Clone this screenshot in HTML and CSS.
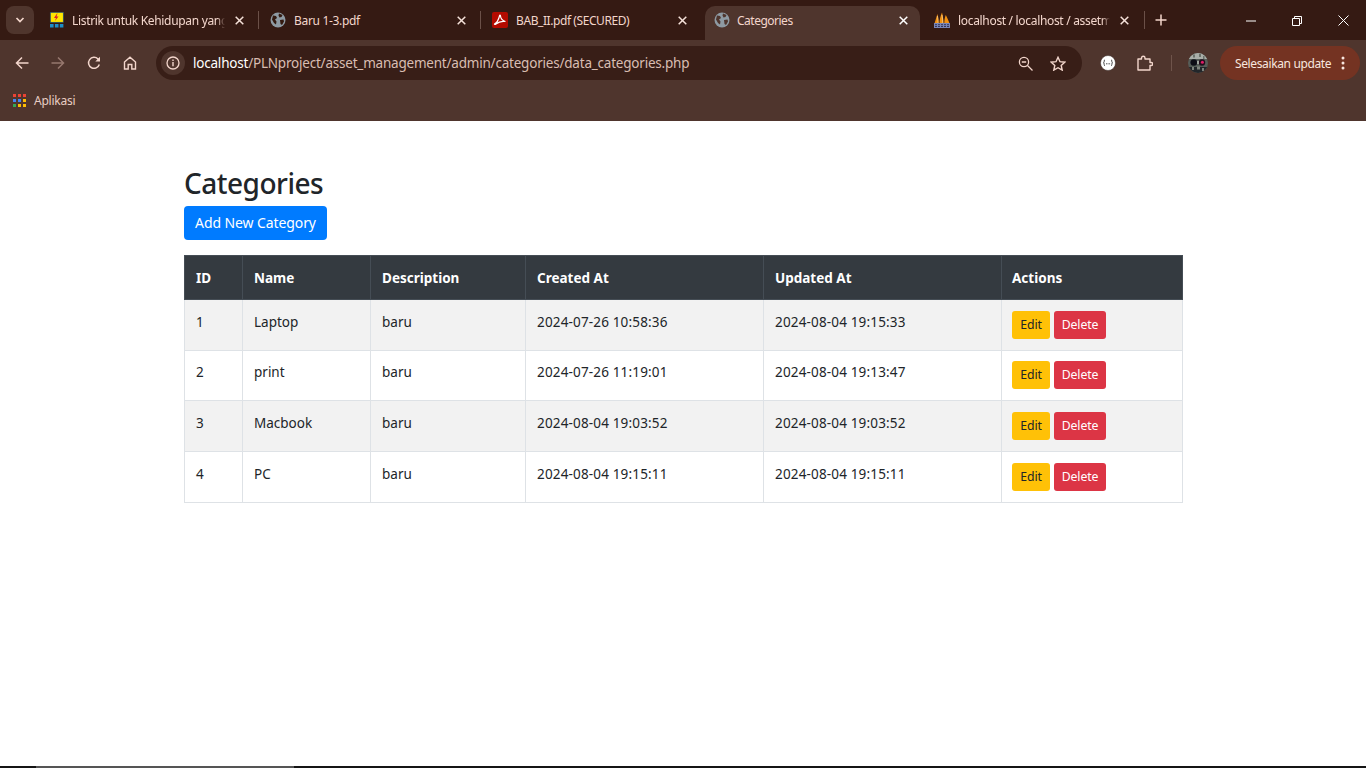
FILE: index.html
```html
<!DOCTYPE html>
<html lang="en">
<head>
    <meta charset="UTF-8">
    <title>Categories</title>
    <link rel="stylesheet" href="styles.css">
</head>
<body>
    <header class="browser">
        <div class="tabstrip">
            <button class="tab-search">
                <svg width="10" height="6" viewBox="0 0 10 6"><path d="M1.5 1l3.5 3.5L8.500 1" fill="none" stroke="#f3d6cc" stroke-width="1.700"/></svg>
            </button>
            <div class="tab tab-1">
                <svg class="favicon" width="16" height="16" viewBox="0 0 16 16"><rect x="1.300" y=".3" width="13" height="10" fill="#ffe600" stroke="#1b4f7a" stroke-width=".7"/><path d="M8 1.500 5 6h2L6 9l3.500-4.500h-2l1-3z" fill="#d8232a"/><path d="M1 12h3.600v3.500H1zM5.900 12h3.600v3.500H5.900zM10.800 12h3.600v3.500h-3.600z" fill="#1d8fc9"/></svg>
                <span class="tab-title fade">Listrik untuk Kehidupan yang</span>
                <svg class="tab-close" width="9" height="9" viewBox="0 0 9 9"><path d="M.7.700l7.600 7.600M8.300.700.7 8.300" stroke="#f6e2da" stroke-width="1.500"/></svg>
            </div>
            <i class="tab-sep"></i>
            <div class="tab tab-2">
                <svg class="favicon" width="16" height="16" viewBox="0 0 16 16"><circle cx="8" cy="8" r="7.500" fill="#8e9aa3"/><path d="M3 3.500l3 .5 1 2-2 1.500 1.500 2-.5 3-2-1.500-2-3.500zM9 1.500l3.500 1.500-1 2-2 .5-1-2zM10 8l3.500-.5.500 2-2 3.500-1.500-1z" fill="#33190f"/></svg>
                <span class="tab-title">Baru 1-3.pdf</span>
                <svg class="tab-close" width="9" height="9" viewBox="0 0 9 9"><path d="M.7.700l7.600 7.600M8.300.700.7 8.300" stroke="#f6e2da" stroke-width="1.500"/></svg>
            </div>
            <i class="tab-sep"></i>
            <div class="tab tab-3">
                <svg class="favicon" width="16" height="16" viewBox="0 0 16 16"><rect width="16" height="16" rx="2" fill="#b30b00"/><path d="M2.500 12c2-1 4-4 5-8 .2-1.200 1-1 1 0 0 2 2 5 5 5.500-3-.5-7 .3-9.500 2.500-1 .8-1.800.5-1.500 0z" fill="none" stroke="#fff" stroke-width="1.200"/></svg>
                <span class="tab-title">BAB_II.pdf (SECURED)</span>
                <svg class="tab-close" width="9" height="9" viewBox="0 0 9 9"><path d="M.7.700l7.600 7.600M8.300.700.7 8.300" stroke="#f6e2da" stroke-width="1.500"/></svg>
            </div>
            <div class="tab tab-active">
                <svg class="favicon" width="16" height="16" viewBox="0 0 16 16"><circle cx="8" cy="8" r="7.500" fill="#8e9aa3"/><path d="M3 3.500l3 .5 1 2-2 1.500 1.500 2-.5 3-2-1.500-2-3.500zM9 1.500l3.500 1.500-1 2-2 .5-1-2zM10 8l3.500-.5.500 2-2 3.500-1.500-1z" fill="#4f352d"/></svg>
                <span class="tab-title">Categories</span>
                <svg class="tab-close" width="9" height="9" viewBox="0 0 9 9"><path d="M.7.700l7.600 7.600M8.300.700.7 8.300" stroke="#fff" stroke-width="1.500"/></svg>
            </div>
            <div class="tab tab-5">
                <svg class="favicon" width="16" height="16" viewBox="0 0 16 16"><path d="M.5 11.500C1.500 8 2.500 4.500 3.500 2c.6 3 1.200 6.500 1.200 9.500zM5.500 11.500c0-3.500 1-8 2.500-11 1 3.500 1.500 7.500 1.500 11zM10.300 11.500c0-3 .4-6 1.500-8.500 1.200 2.500 3 6 3.700 8.500z" fill="#f29111"/><path d="M3.500 4c.4 2.500.6 5 .6 7.500M8 3c.5 3 .8 5.500.8 8.500" stroke="#fbe3b5" stroke-width=".6" fill="none"/><rect x="0" y="11" width="16" height="5" fill="#7a86b8"/><path d="M1 12.700h14M1 14.500h14" stroke="#2c2f55" stroke-width=".9" stroke-dasharray="2 1"/></svg>
                <span class="tab-title fade">localhost / localhost / assetm</span>
                <svg class="tab-close" width="9" height="9" viewBox="0 0 9 9"><path d="M.7.700l7.600 7.600M8.300.700.7 8.300" stroke="#f6e2da" stroke-width="1.500"/></svg>
            </div>
            <i class="tab-sep"></i>
            <svg class="new-tab" width="12" height="12" viewBox="0 0 12 12"><path d="M6 .500v11M.500 6h11" stroke="#f3d6cc" stroke-width="1.500"/></svg>
            <div class="window-controls">
                <svg width="10" height="10" viewBox="0 0 10 10"><path d="M0 5h10" stroke="#fff"/></svg>
                <svg width="10" height="10" viewBox="0 0 10 10"><path d="M.500 2.500h7v7h-7zM2.500 2.500v-2h7v7h-2" fill="none" stroke="#fff"/></svg>
                <svg width="11" height="11" viewBox="0 0 11 11"><path d="M.500.500l10 10M10.500.500l-10 10" stroke="#fff"/></svg>
            </div>
        </div>
        <div class="toolbar">
            <svg class="nav-icon" width="14" height="14" viewBox="0 0 14 14"><path d="M13.500 7H1.500M7 1.500 1.500 7 7 12.500" fill="none" stroke="#f3d6cc" stroke-width="1.500"/></svg>
            <svg class="nav-icon" width="14" height="14" viewBox="0 0 14 14"><path d="M.500 7h12M7 1.500 12.500 7 7 12.500" fill="none" stroke="#97786e" stroke-width="1.500"/></svg>
            <svg class="nav-icon" width="14" height="14" viewBox="0 0 14 14"><path d="M12.300 8.500A5.500 5.500 0 1 1 11 3l1.500 1.500" fill="none" stroke="#f3d6cc" stroke-width="1.500"/><path d="M13 .700V5.500H8.300z" fill="#f3d6cc"/></svg>
            <svg class="nav-icon" width="14" height="14" viewBox="0 0 14 14"><path d="M1.500 6 7 1.200 12.500 6v7H8.800V8.500H5.200V13H1.500z" fill="none" stroke="#f3d6cc" stroke-width="1.400"/></svg>
            <div class="omnibox">
                <span class="site-info">
                    <svg width="14" height="14" viewBox="0 0 14 14"><circle cx="7" cy="7" r="6" fill="none" stroke="#f3d6cc" stroke-width="1.300"/><path d="M7 6v4.200M7 3.500v1.400" stroke="#f3d6cc" stroke-width="1.400"/></svg>
                </span>
                <span class="url"><b>localhost</b>/PLNproject/asset_management/admin/categories/data_categories.php</span>
                <svg class="zoom-icon" width="15" height="15" viewBox="0 0 15 15"><circle cx="6" cy="6" r="4.600" fill="none" stroke="#f3d6cc" stroke-width="1.300"/><path d="M3.800 6h4.400M9.500 9.500l5 5" stroke="#f3d6cc" stroke-width="1.300"/></svg>
                <svg class="star-icon" width="16" height="15" viewBox="0 0 16 15"><path d="M8 1.300l2 4.400 4.800.5-3.600 3.200 1 4.700L8 11.700l-4.200 2.400 1-4.700L1.200 6.200 6 5.700z" fill="none" stroke="#f3d6cc" stroke-width="1.400"/></svg>
            </div>
            <svg class="ext-json" width="16" height="16" viewBox="0 0 16 16"><circle cx="8" cy="8" r="7.500" fill="#fff" stroke="#3a2a26" stroke-width=".5"/><path d="M5 4.800c-1.200 0-.6 2.200-1 2.700-.1.200-.3.300-.5.300.2 0 .4.100.5.300.4.500-.2 2.700 1 2.700M11 4.800c1.200 0 .6 2.200 1 2.700.1.200.3.300.5.300-.2 0-.4.100-.5.300-.4.500.2 2.700-1 2.700" fill="none" stroke="#222" stroke-width=".8"/><path d="M6 8.800h.9M7.600 8.800h.9M9.200 8.800h.9" stroke="#222" stroke-width=".9"/></svg>
            <svg class="ext-puzzle" width="16" height="16" viewBox="0 0 16 16"><path d="M1 4h3.500V3a1.700 1.700 0 0 1 3.500 0v1h5v3.500h1.200a1.500 1.500 0 0 1 0 3H13V15H1z" fill="none" stroke="#f3d6cc" stroke-width="1.400" stroke-linejoin="round"/></svg>
            <i class="toolbar-sep"></i>
            <svg class="avatar" width="20" height="20" viewBox="0 0 20 20">
                <defs>
                    <clipPath id="avatarClip"><circle cx="10" cy="10" r="10"/></clipPath>
                    <filter id="avatarBlur"><feGaussianBlur stdDeviation=".6"/></filter>
                </defs>
                <g clip-path="url(#avatarClip)">
                    <rect width="20" height="20" fill="#565d58"/>
                    <g filter="url(#avatarBlur)">
                        <path d="M2 0h16l2 6H0z" fill="#a9aea8"/>
                        <path d="M5 1.500h2v3H5zM11 1h2v3h-2zM15 3h1.500v3H15z" fill="#6a716b"/>
                        <circle cx="5.800" cy="9.500" r="3.300" fill="#0a0b16"/>
                        <circle cx="14" cy="9.500" r="3.200" fill="#20101c"/>
                        <circle cx="14.400" cy="9.300" r="1.500" fill="#e01c66"/>
                        <path d="M9 8h2v3H9z" fill="#9fa49e"/>
                        <path d="M0 14h20v6H0z" fill="#23272a"/>
                        <path d="M4 14h2v3H4zM9 13.500h3v3H9zM14 15h2v3h-2z" fill="#7d827c"/>
                    </g>
                </g>
            </svg>
            <div class="update-btn">
                <span>Selesaikan update</span>
                <svg width="4" height="14" viewBox="0 0 4 14"><circle cx="2" cy="2" r="1.500" fill="#f8e6df"/><circle cx="2" cy="7" r="1.500" fill="#f8e6df"/><circle cx="2" cy="12" r="1.500" fill="#f8e6df"/></svg>
            </div>
        </div>
        <div class="bookmarks">
            <svg width="13" height="13" viewBox="0 0 13 13">
                <rect width="3" height="3" fill="#ea4335"/><rect x="5" width="3" height="3" fill="#ea4335"/><rect x="10" width="3" height="3" fill="#ea4335"/>
                <rect y="5" width="3" height="3" fill="#4285f4"/><rect x="5" y="5" width="3" height="3" fill="#4285f4"/><rect x="10" y="5" width="3" height="3" fill="#fbbc05"/>
                <rect y="10" width="3" height="3" fill="#34a853"/><rect x="5" y="10" width="3" height="3" fill="#fbbc05"/><rect x="10" y="10" width="3" height="3" fill="#fbbc05"/>
            </svg>
            <span>Aplikasi</span>
        </div>
    </header>

    <main class="container">
        <h2>Categories</h2>
        <a class="btn btn-add">Add New Category</a>
        <table class="data-table">
            <thead>
                <tr>
                    <th class="col-id">ID</th>
                    <th class="col-name">Name</th>
                    <th class="col-desc">Description</th>
                    <th class="col-date">Created At</th>
                    <th class="col-date">Updated At</th>
                    <th class="col-actions">Actions</th>
                </tr>
            </thead>
            <tbody>
                <tr>
                    <td>1</td><td>Laptop</td><td>baru</td><td class="stamp">2024-07-26 10:58:36</td><td class="stamp">2024-08-04 19:15:33</td>
                    <td class="actions"><a class="btn-sm btn-edit">Edit</a><a class="btn-sm btn-delete">Delete</a></td>
                </tr>
                <tr>
                    <td>2</td><td>print</td><td>baru</td><td class="stamp">2024-07-26 11:19:01</td><td class="stamp">2024-08-04 19:13:47</td>
                    <td class="actions"><a class="btn-sm btn-edit">Edit</a><a class="btn-sm btn-delete">Delete</a></td>
                </tr>
                <tr>
                    <td>3</td><td>Macbook</td><td>baru</td><td class="stamp">2024-08-04 19:03:52</td><td class="stamp">2024-08-04 19:03:52</td>
                    <td class="actions"><a class="btn-sm btn-edit">Edit</a><a class="btn-sm btn-delete">Delete</a></td>
                </tr>
                <tr>
                    <td>4</td><td>PC</td><td>baru</td><td class="stamp">2024-08-04 19:15:11</td><td class="stamp">2024-08-04 19:15:11</td>
                    <td class="actions"><a class="btn-sm btn-edit">Edit</a><a class="btn-sm btn-delete">Delete</a></td>
                </tr>
            </tbody>
        </table>
    </main>

    <footer class="taskbar-edge"><i></i></footer>
</body>
</html>
```

FILE: styles.css
```css
* { box-sizing: border-box; }
html, body { height: 100%; }
body {
    margin: 0;
    display: flex;
    flex-direction: column;
    height: 768px;
    overflow: hidden;
    font-family: "Noto Sans", "Open Sans", sans-serif;
    color: #212529;
    background: #fff;
}

/* browser chrome */
.browser { height: 121px; flex: none; background: #4f352d; color: #f3d6cc; }
.tabstrip {
    height: 40px;
    background: #351a13;
    display: flex;
    align-items: flex-start;
    padding: 6px 0 0 6px;
    font-size: 12px;
}
.tab-search {
    width: 28px;
    height: 28px;
    border: none;
    padding: 0;
    border-radius: 8px;
    background: #4f352d;
    display: flex;
    align-items: center;
    justify-content: center;
    flex: none;
}
.tab {
    height: 34px;
    display: flex;
    align-items: center;
    flex: none;
    padding: 0 15px 6px 15px;
}
.tab-1 { width: 225px; }
.tab-2 { width: 222px; padding-left: 11px; }
.tab-3 { width: 224px; padding-left: 11px; padding-right: 18px; }
.tab-3 .tab-title { letter-spacing: -0.42px; }
.tab-active {
    width: 215px;
    background: #4f352d;
    border-radius: 10px 10px 0 0;
    padding-left: 9px;
    padding-right: 12px;
}
.tab-active .favicon { margin-right: 7px; }
.tab-active .tab-title { letter-spacing: -0.5px; }
.tab-5 { width: 225px; padding-left: 14px; padding-right: 16px; }
.favicon { flex: none; margin-right: 8px; }
.tab-1 .favicon { margin-right: 7px; }
.tab-title {
    flex: 1;
    min-width: 0;
    white-space: nowrap;
    letter-spacing: -0.32px;
}
/* long titles fade out before the close button */
.fade {
    -webkit-mask-image: linear-gradient(to left, transparent 3px, #000 11px);
    mask-image: linear-gradient(to left, transparent 3px, #000 11px);
}
.tab-close { margin-left: 7px; flex: none; }
.tab-sep { width: 1px; height: 18px; margin-top: 5px; background: #6b5048; flex: none; margin-left: -1px; }
.new-tab { margin: 8px 0 0 10px; flex: none; }
.window-controls {
    margin-left: auto;
    display: flex;
    align-items: center;
    gap: 36px;
    padding: 9px 17px 0 0;
}

.toolbar {
    height: 44px;
    display: flex;
    align-items: center;
    padding: 3px 6px 1px 15px;
}
.nav-icon { flex: none; margin-right: 22px; }
.nav-icon:nth-child(4) { margin-right: 19px; }
.omnibox {
    width: 926px;
    height: 34px;
    border-radius: 17px;
    background: #381e17;
    display: flex;
    align-items: center;
    padding: 0 16px 0 5px;
    font-size: 13.500px;
    flex: none;
}
.site-info {
    width: 24px;
    height: 24px;
    border-radius: 50%;
    background: #4f352d;
    display: flex;
    align-items: center;
    justify-content: center;
    margin-right: 8px;
    flex: none;
}
.url { flex: 1; white-space: nowrap; color: #d9bdb2; letter-spacing: -0.21px; }
.url b { font-weight: 400; color: #fff; }
.zoom-icon { margin-right: 17px; flex: none; }
.ext-json { margin-left: 18px; flex: none; }
.ext-puzzle { margin-left: 21px; flex: none; }
.toolbar-sep { width: 1px; height: 16px; background: #6f544b; margin-left: 18px; flex: none; }
.avatar { margin-left: 16px; flex: none; }
.update-btn {
    margin-left: 12px;
    width: 140px;
    height: 34px;
    border-radius: 17px;
    background: #743322;
    color: #f8e6df;
    display: flex;
    align-items: center;
    justify-content: space-between;
    padding: 0 15px;
    font-size: 12px;
    letter-spacing: -0.37px;
    white-space: nowrap;
}
.bookmarks {
    height: 37px;
    display: flex;
    align-items: center;
    gap: 8px;
    padding: 0 0 5px 13px;
    font-size: 12px;
    letter-spacing: -0.25px;
    color: #e8cdc3;
}

/* page */
.container { flex: 1; width: 999px; margin-left: 184px; padding-top: 44px; }
h2 {
    margin: 0 0 5px;
    font-size: 28px;
    line-height: 36px;
    font-weight: 500;
    letter-spacing: -0.5px;
}
.btn {
    display: inline-block;
    height: 34px;
    line-height: 33px;
    width: 143px;
    text-align: center;
    background: #007bff;
    color: #fff;
    border-radius: 4px;
    font-size: 14px;
    letter-spacing: -0.1px;
}
.data-table {
    margin-top: 15px;
    width: 999px;
    border-collapse: collapse;
    table-layout: fixed;
    font-size: 13.500px;
}
.data-table th, .data-table td {
    border: 1px solid #dee2e6;
    padding: 0 11px;
    text-align: left;
}
.data-table th {
    height: 44px;
    background: #343a40;
    border-color: #454d55;
    color: #fff;
    font-weight: 700;
}
.data-table td { height: 50.500px; padding-bottom: 6px; }
.data-table tbody tr:last-child td { height: 51.500px; }
.data-table tbody tr:nth-child(odd) { background: #f2f2f2; }
.data-table td.stamp { letter-spacing: 0.16px; }
.col-id { width: 58px; }
.col-name { width: 128px; }
.col-desc { width: 155px; }
.col-date { width: 238px; }
.data-table th.col-actions { padding-left: 10px; }
.data-table td.actions { padding: 0 0 0 10px; white-space: nowrap; }
.btn-sm {
    display: inline-block;
    height: 28px;
    line-height: 27px;
    text-align: center;
    border-radius: 3px;
    font-size: 12.250px;
    letter-spacing: -0.1px;
}
.btn-edit { width: 38px; background: #ffc107; color: #212529; }
.btn-delete { width: 52px; margin-left: 4px; background: #dc3545; color: #fff; }

.taskbar-edge { height: 2px; flex: none; background: #151515; padding-left: 36px; }
.taskbar-edge i { display: block; width: 258px; height: 2px; background: #555; }
```
